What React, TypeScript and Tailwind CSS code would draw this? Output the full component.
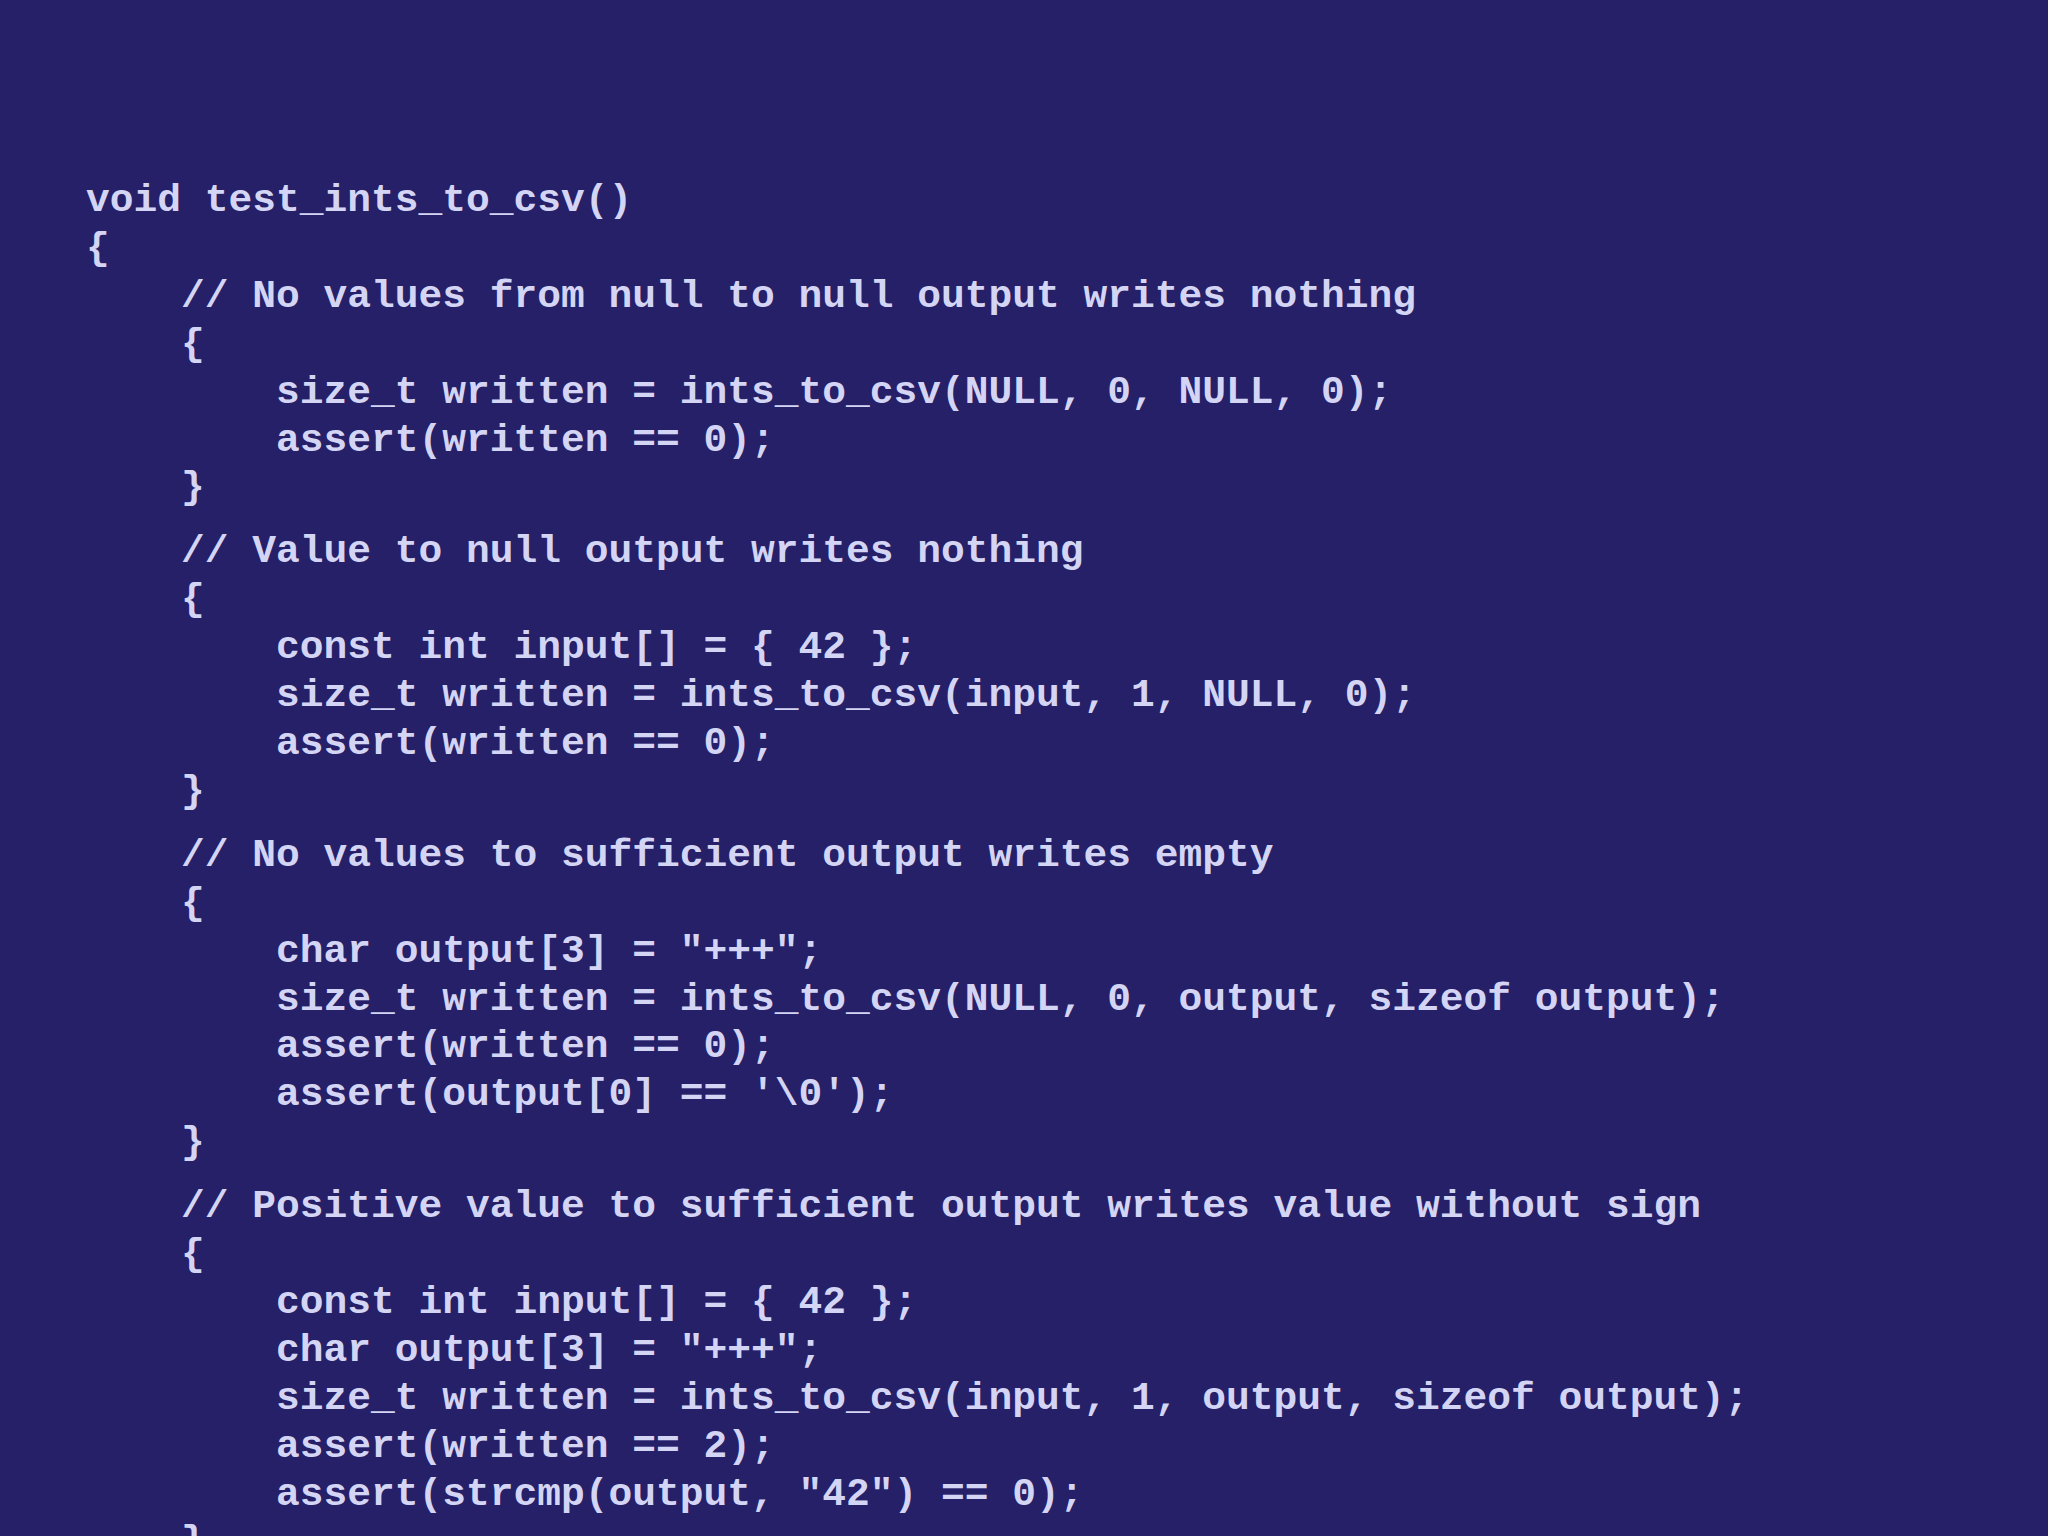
const blocks: string[][] = [
  [
    "void test_ints_to_csv()",
    "{",
    "    // No values from null to null output writes nothing",
    "    {",
    "        size_t written = ints_to_csv(NULL, 0, NULL, 0);",
    "        assert(written == 0);",
    "    }",
  ],
  [
    "    // Value to null output writes nothing",
    "    {",
    "        const int input[] = { 42 };",
    "        size_t written = ints_to_csv(input, 1, NULL, 0);",
    "        assert(written == 0);",
    "    }",
  ],
  [
    "    // No values to sufficient output writes empty",
    "    {",
    "        char output[3] = \"+++\";",
    "        size_t written = ints_to_csv(NULL, 0, output, sizeof output);",
    "        assert(written == 0);",
    "        assert(output[0] == '\\0');",
    "    }",
  ],
  [
    "    // Positive value to sufficient output writes value without sign",
    "    {",
    "        const int input[] = { 42 };",
    "        char output[3] = \"+++\";",
    "        size_t written = ints_to_csv(input, 1, output, sizeof output);",
    "        assert(written == 2);",
    "        assert(strcmp(output, \"42\") == 0);",
    "    }",
  ],
];

export default function App() {
  return (
    <div className="w-full h-screen overflow-hidden bg-[#252068]">
      <div
        className="pt-[177px] pl-[86px] text-[39.6px] leading-[47.9px] font-bold text-[#d4d5f5] whitespace-pre flex flex-col gap-[16px]"
        style={{ fontFamily: '"Liberation Mono", "Courier New", monospace' }}
      >
        {blocks.map((b, i) => (
          <div key={i}>
            {b.map((line, j) => (
              <div key={j}>{line}</div>
            ))}
          </div>
        ))}
      </div>
    </div>
  );
}
